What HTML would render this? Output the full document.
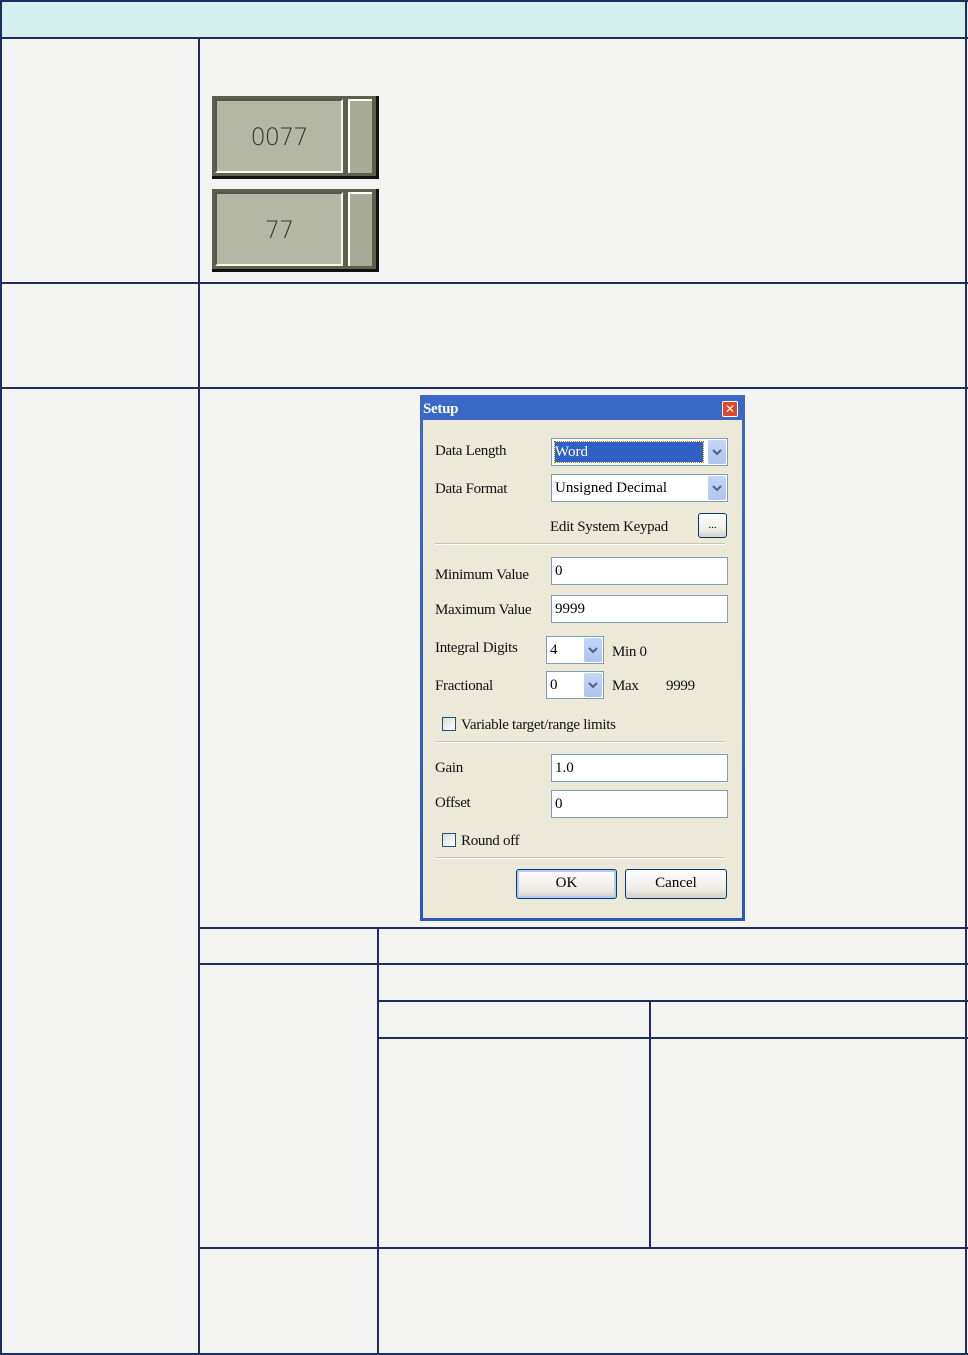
<!DOCTYPE html>
<html><head><style>
body{margin:0;width:968px;height:1355px;background:#f4f4f2;position:relative;overflow:hidden;font-family:"Liberation Serif",serif;}
.l{position:absolute;background:#1f2d5c;}
.a{position:absolute;}
.t{position:absolute;font-size:15px;color:#111;white-space:nowrap;letter-spacing:-0.3px}
.inp{position:absolute;background:#fff;border:1px solid #7f9db9;box-sizing:border-box;font-size:15px;padding-left:3px;line-height:26px;}
.dd{position:absolute;right:1px;top:1px;bottom:1px;width:18px;background:linear-gradient(#c5d5f5,#b0c4ee);border-radius:2px;}
.dd svg{position:absolute;left:4px;top:8px}
.btn{position:absolute;background:linear-gradient(#fff,#ecebe6 70%,#d6d0c5);border:1px solid #003c74;border-radius:3px;box-sizing:border-box;text-align:center;font-size:15px;}
.sep{position:absolute;height:1px;background:#c8c4b4;border-bottom:1px solid #fff;}
.cb{position:absolute;width:14px;height:14px;border:1px solid #1c5180;background:linear-gradient(135deg,#dcdcd6,#fff);box-sizing:border-box;}
.num{position:absolute;background:#b4b7a4;font-family:"DejaVu Sans",sans-serif;font-size:24px;font-weight:200;color:#333;text-align:center;letter-spacing:-1px}
</style></head><body>
<div class="a" style="left:0;top:0;width:968px;height:38px;background:#d3f0ef"></div>
<div class="l" style="left:0;top:0;width:968px;height:2px"></div>
<div class="l" style="left:0;top:37px;width:968px;height:2px"></div>
<div class="l" style="left:0;top:0;width:2px;height:1355px"></div>
<div class="l" style="left:965px;top:0;width:2px;height:1355px"></div>
<div class="l" style="left:0;top:1353px;width:968px;height:2px"></div>
<div class="l" style="left:198px;top:38px;width:2px;height:1317px"></div>
<div class="l" style="left:0;top:282px;width:968px;height:2px"></div>
<div class="l" style="left:0;top:387px;width:968px;height:2px"></div>
<div class="l" style="left:198px;top:927px;width:770px;height:2px"></div>
<div class="l" style="left:198px;top:963px;width:770px;height:2px"></div>
<div class="l" style="left:378px;top:1000px;width:590px;height:2px"></div>
<div class="l" style="left:378px;top:1037px;width:590px;height:2px"></div>
<div class="l" style="left:198px;top:1247px;width:770px;height:2px"></div>
<div class="l" style="left:377px;top:928px;width:2px;height:427px"></div>
<div class="l" style="left:649px;top:1001px;width:2px;height:247px"></div>

<div class="a" style="left:212px;top:96px;width:167px;height:83px;background:#111"></div>
<div class="a" style="left:212px;top:96px;width:164px;height:80px;background:#5f604a"></div>
<div class="num" style="left:215px;top:99px;width:128px;height:74px;border:2px solid #f8f8f0;border-top-color:#555;border-left-color:#555;box-sizing:border-box;line-height:72px">0077</div>
<div class="a" style="left:348px;top:99px;width:24px;height:74px;background:#a8ab98;border-left:2px solid #fff;border-top:2px solid #fff;box-sizing:border-box"></div>
<div class="a" style="left:212px;top:189px;width:167px;height:83px;background:#111"></div>
<div class="a" style="left:212px;top:189px;width:164px;height:80px;background:#5f604a"></div>
<div class="num" style="left:215px;top:192px;width:128px;height:74px;border:2px solid #f8f8f0;border-top-color:#555;border-left-color:#555;box-sizing:border-box;line-height:72px">77</div>
<div class="a" style="left:348px;top:192px;width:24px;height:74px;background:#a8ab98;border-left:2px solid #fff;border-top:2px solid #fff;box-sizing:border-box"></div>

<div class="a" style="left:420px;top:395px;width:325px;height:526px;background:linear-gradient(#3b68c6,#2a58b8)"></div>
<div class="a" style="left:423px;top:420px;width:319px;height:498px;background:#ece9d8"></div>
<div class="t" style="left:423px;top:401px;color:#fff;font-weight:bold;font-size:15px">Setup</div>
<div class="a" style="left:722px;top:401px;width:16px;height:16px;background:#e0462a;border:1px solid #fff;box-sizing:border-box;border-radius:2px;color:#fff;font:bold 12px/14px 'DejaVu Sans',sans-serif;text-align:center">✕</div>

<div class="t" style="left:435px;top:443px">Data Length</div>
<div class="inp" style="left:551px;top:438px;width:177px;height:28px"><span style="background:#3160c4;color:#fff;display:inline-block;width:148px;line-height:20px;outline:1px dotted #b08000">Word</span><div class="dd"><svg width="10" height="8"><path d="M1 2l4 4 4-4" stroke="#4d6185" stroke-width="2" fill="none"/></svg></div></div>
<div class="t" style="left:435px;top:481px">Data Format</div>
<div class="inp" style="left:551px;top:474px;width:177px;height:28px">Unsigned Decimal<div class="dd"><svg width="10" height="8"><path d="M1 2l4 4 4-4" stroke="#4d6185" stroke-width="2" fill="none"/></svg></div></div>
<div class="t" style="left:550px;top:519px">Edit System Keypad</div>
<div class="btn" style="left:698px;top:513px;width:29px;height:25px;font-size:11px;line-height:22px">...</div>
<div class="sep" style="left:435px;top:543px;width:290px"></div>
<div class="t" style="left:435px;top:567px">Minimum Value</div>
<div class="inp" style="left:551px;top:557px;width:177px;height:28px">0</div>
<div class="t" style="left:435px;top:602px">Maximum Value</div>
<div class="inp" style="left:551px;top:595px;width:177px;height:28px">9999</div>
<div class="t" style="left:435px;top:640px">Integral Digits</div>
<div class="inp" style="left:546px;top:636px;width:58px;height:28px">4<div class="dd"><svg width="10" height="8"><path d="M1 2l4 4 4-4" stroke="#4d6185" stroke-width="2" fill="none"/></svg></div></div>
<div class="t" style="left:612px;top:644px">Min 0</div>
<div class="t" style="left:435px;top:678px">Fractional</div>
<div class="inp" style="left:546px;top:671px;width:58px;height:28px">0<div class="dd"><svg width="10" height="8"><path d="M1 2l4 4 4-4" stroke="#4d6185" stroke-width="2" fill="none"/></svg></div></div>
<div class="t" style="left:612px;top:678px">Max</div>
<div class="t" style="left:666px;top:678px">9999</div>
<div class="cb" style="left:442px;top:717px"></div>
<div class="t" style="left:461px;top:717px">Variable target/range limits</div>
<div class="sep" style="left:435px;top:741px;width:290px"></div>
<div class="t" style="left:435px;top:760px">Gain</div>
<div class="inp" style="left:551px;top:754px;width:177px;height:28px">1.0</div>
<div class="t" style="left:435px;top:795px">Offset</div>
<div class="inp" style="left:551px;top:790px;width:177px;height:28px">0</div>
<div class="cb" style="left:442px;top:833px"></div>
<div class="t" style="left:461px;top:833px">Round off</div>
<div class="sep" style="left:435px;top:857px;width:290px"></div>
<div class="btn" style="left:516px;top:869px;width:101px;height:30px;line-height:27px;box-shadow:inset 0 0 0 2px #b6c9f0">OK</div>
<div class="btn" style="left:625px;top:869px;width:102px;height:30px;line-height:27px">Cancel</div>
</body></html>
